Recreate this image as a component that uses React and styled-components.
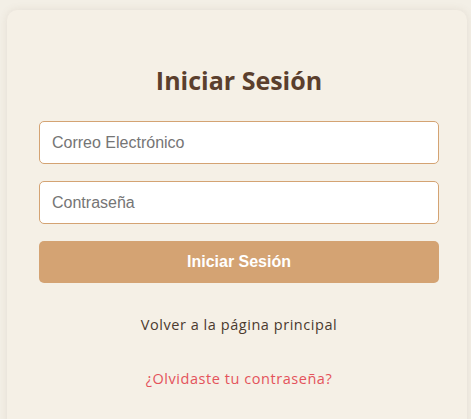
import React from "react";
import styled, { createGlobalStyle } from "styled-components";

const GlobalStyle = createGlobalStyle`
  html, body {
    margin: 0;
    padding: 0;
    background: #f3efe6;
  }
  body {
    font-family: "Open Sans", "Noto Sans", sans-serif;
  }
`;

const App = () => {
  return (
    <>
      <GlobalStyle />
      <Card>
        <Title>Iniciar Sesión</Title>
        <Form onSubmit={(e) => e.preventDefault()}>
          <Input type="email" placeholder="Correo Electrónico" />
          <Input type="password" placeholder="Contraseña" />
          <SubmitButton type="submit">Iniciar Sesión</SubmitButton>
        </Form>
        <LinkText href="#">Volver a la página principal</LinkText>
        <LinkText href="#" $danger>
          ¿Olvidaste tu contraseña?
        </LinkText>
      </Card>
    </>
  );
};

export default App;

const Card = styled.div`
  box-sizing: border-box;
  width: 460px;
  min-height: 430px;
  margin: 10px 0 0 7px;
  padding: 50px 28px 20px 32px;
  background: #f5f0e6;
  border-radius: 10px;
  box-shadow: 0 0 8px rgba(120, 100, 70, 0.12);
  display: flex;
  flex-direction: column;
  align-items: center;
`;

const Title = styled.h2`
  margin: 0 0 21px;
  font-family: "Open Sans", "Noto Sans", sans-serif;
  font-size: 25px;
  font-weight: 700;
  line-height: 40px;
  color: #5b3f2d;
`;

const Form = styled.form`
  width: 100%;
  display: flex;
  flex-direction: column;
  gap: 17px;
`;

const Input = styled.input`
  box-sizing: border-box;
  width: 100%;
  height: 43px;
  padding: 0 12px;
  border: 1px solid #d4a373;
  border-radius: 5px;
  background: #fff;
  font-family: "Liberation Sans", Arial, sans-serif;
  font-size: 16px;
  color: #333;
  outline: none;

  ::placeholder {
    color: #757575;
  }
`;

const SubmitButton = styled.button`
  height: 42px;
  border: none;
  border-radius: 5px;
  background: #d4a373;
  color: #fff;
  font-family: "Liberation Sans", Arial, sans-serif;
  font-size: 16px;
  font-weight: 700;
  cursor: pointer;
`;

const LinkText = styled.a`
  margin-top: ${(p) => (p.$danger ? "32px" : "31px")};
  font-family: "Open Sans", "Noto Sans", sans-serif;
  font-size: 14.5px;
  letter-spacing: 0.55px;
  line-height: 22px;
  color: ${(p) => (p.$danger ? "#e4535b" : "#4b3a2f")};
  text-decoration: none;
`;
